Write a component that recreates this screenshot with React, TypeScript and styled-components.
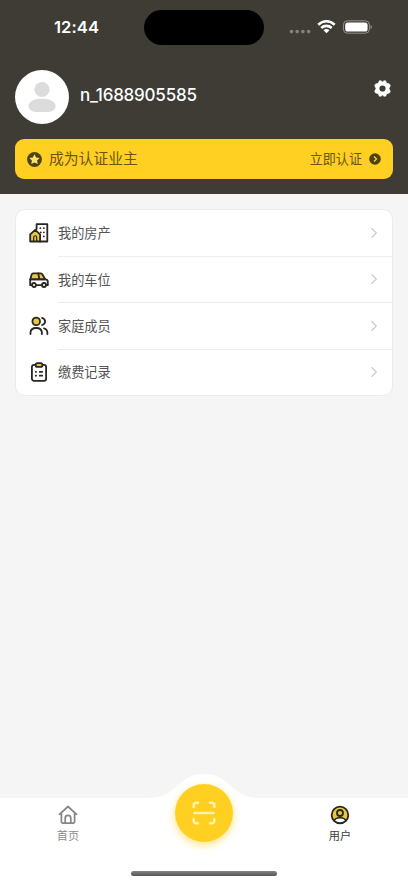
import React from "react";
import styled, { createGlobalStyle } from "styled-components";

const GlobalStyle = createGlobalStyle`
  * { box-sizing: border-box; }
  body {
    margin: 0;
    background: #f5f5f6;
    font-family: Inter, "Noto Sans CJK SC", sans-serif;
  }
  svg { display: block; flex: none; }
  button { border: 0; padding: 0; background: none; font: inherit; color: inherit; text-align: left; }
`;

const Screen = styled.div`
  display: flex;
  flex-direction: column;
  width: 408px;
  height: 883px;
  overflow: hidden;
  background: #f5f5f6;
`;

const Header = styled.header`
  height: 194px;
  flex: none;
  background: #3e3c35;
`;

const StatusBar = styled.div`
  display: grid;
  grid-template-columns: 144px 120px 1fr;
  height: 70px;
  padding-top: 10px;
`;

const Clock = styled.div`
  padding-left: 54px;
  height: 35px;
  line-height: 35px;
  font-size: 16.6px;
  font-weight: 600;
  letter-spacing: 0.05px;
  color: #fff;
`;

const Island = styled.div`
  height: 35px;
  border-radius: 18px;
  background: #000;
`;

const Signals = styled.div`
  display: flex;
  align-items: center;
  height: 34px;
  padding-left: 25px;
`;

const Profile = styled.div`
  display: flex;
  height: 54px;
  padding: 0 17px 0 15px;
`;

const Avatar = styled.div`
  width: 54px;
  height: 54px;
  border-radius: 50%;
  overflow: hidden;
  background: #fff;
`;

const UserName = styled.div`
  flex: 1;
  padding-left: 11px;
  line-height: 51px;
  font-size: 17px;
  font-weight: 500;
  letter-spacing: -0.22px;
  color: #fff;
`;

const Settings = styled.button`
  height: 17px;
  margin-top: 10px;
`;

const Banner = styled.div`
  display: flex;
  align-items: center;
  height: 40px;
  margin: 15px 15px 0;
  padding: 0 12px;
  border-radius: 9px;
  background: #ffcf22;
  color: #6a560f;
`;

const BannerTitle = styled.span`
  flex: 1;
  padding-left: 7px;
  font-size: 14.8px;
  line-height: 40px;
  height: 40px;
`;

const BannerAction = styled.button`
  display: flex;
  align-items: center;
  gap: 7px;
  font-size: 13.1px;
  line-height: 38px;
  height: 40px;
`;

const Card = styled.main`
  margin: 15px 15px 0;
  height: 187px;
  flex: none;
  border: 1px solid #ebebec;
  border-radius: 10px;
  background: #fff;
  display: grid;
  grid-template-rows: 47px 46px 47px 45px;
`;

const MenuRow = styled.button`
  display: flex;
  align-items: center;
  padding-left: 13px;
`;

const MenuBody = styled.span<{ $last: boolean }>`
  flex: 1;
  display: flex;
  align-items: center;
  justify-content: space-between;
  height: 100%;
  margin-left: 9px;
  padding-right: 14px;
  padding-bottom: 1px;
  border-bottom: 1px solid ${(p) => (p.$last ? "transparent" : "#ececec")};
  font-size: 13.2px;
  color: #555;
`;

const Spacer = styled.div`
  flex: 1;
`;

const Footer = styled.footer`
  position: relative;
  height: 85px;
  flex: none;
  background: #fff;
`;

const Bump = styled.svg`
  position: absolute;
  left: 149px;
  top: -25px;
`;

const Tabs = styled.nav`
  display: grid;
  grid-template-columns: repeat(3, 1fr);
  height: 73px;
`;

const Tab = styled.button<{ $active?: boolean }>`
  display: flex;
  flex-direction: column;
  align-items: center;
  gap: 3px;
  padding-top: 7px;
  font-size: 11.2px;
  line-height: 17px;
  color: ${(p) => (p.$active ? "#3c3c3a" : "#8c8c8c")};
`;

const ScanButton = styled.button`
  position: relative;
  display: flex;
  align-items: center;
  justify-content: center;
  justify-self: center;
  width: 58px;
  height: 58px;
  margin-top: -14px;
  border-radius: 50%;
  background: #ffcf22;
  box-shadow: 0 3px 8px rgba(255, 207, 34, 0.55);
`;

const HomeIndicator = styled.div`
  width: 146px;
  height: 5px;
  margin: 0 auto;
  border-radius: 3px;
  background: linear-gradient(#858585, #555);
`;

const ink = "#292722";
const gold = "#e8c745";

const SignalIcons = () => (
  <Signals>
    <svg width="83" height="16" viewBox="0 0 83 16">
      <g fill="#85837e">
        <circle cx="2.5" cy="12.6" r="1.8" />
        <circle cx="8.2" cy="12.6" r="1.8" />
        <circle cx="13.9" cy="12.6" r="1.8" />
        <circle cx="19.6" cy="12.6" r="1.8" />
      </g>
      <g fill="none" stroke="#fff" strokeWidth="2.6">
        <path d="M29.2 5.7C34.1 1.1 40.8 1.1 45.7 5.7" />
        <path d="M32.2 9C35.2 6.2 39.7 6.2 42.7 9" />
      </g>
      <path d="M34.5 11.2c1.7-1.5 4.3-1.5 6 0l-3 3.1z" fill="#fff" />
      <rect x="54.4" y="1.8" width="26" height="12.4" rx="4" fill="none" stroke="#92918d" />
      <rect x="56.2" y="3.5" width="22.4" height="9" rx="2.6" fill="#fff" />
      <path d="M81.5 6v4c1-.3 1.4-1 1.4-2s-.4-1.7-1.4-2z" fill="#92918d" />
    </svg>
  </Signals>
);

const PersonPicture = () => (
  <svg width="54" height="54" viewBox="0 0 54 54" fill="#dcdcdc">
    <circle cx="27" cy="19.5" r="7.6" />
    <path d="M13.5 36C13.5 31.5 19 28.8 27 28.8S40.5 31.5 40.5 36C40.5 40 36 42 32 42H22C18 42 13.5 40 13.5 36Z" />
  </svg>
);

const Gear = () => (
  <svg width="17" height="17" viewBox="-8.5 -8.5 17 17">
    <path
      d="M-3.2 -7.7H-1.4L0 -6.5L1.4 -7.7H3.2L4.2 -5.2L6.9 -4.6L7.8 -2.8L6.5 0L7.8 2.8L6.9 4.6L4.2 5.2L3.2 7.7H1.4L0 6.5L-1.4 7.7H-3.2L-4.2 5.2L-6.9 4.6L-7.8 2.8L-6.5 0L-7.8 -2.8L-6.9 -4.6L-4.2 -5.2Z"
      fill="#fff"
      stroke="#fff"
      strokeWidth=".6"
      strokeLinejoin="round"
    />
    <circle r="3.1" fill="#3e3c35" />
  </svg>
);

const StarBadge = () => (
  <svg width="15" height="15" viewBox="0 0 15 15">
    <circle cx="7.5" cy="7.5" r="7.4" fill="#51430f" />
    <path d="M7.5 2.2l1.6 3.3 3.6.5-2.6 2.5.6 3.6-3.2-1.7-3.2 1.7.6-3.6L2.3 6l3.6-.5z" fill="#ffe16a" />
  </svg>
);

const ArrowBadge = () => (
  <svg width="12" height="12" viewBox="0 0 12 12">
    <circle cx="6" cy="6" r="5.8" fill="#51430f" />
    <path d="M5 3.5L7.5 6 5 8.5" fill="none" stroke="#f5d568" strokeWidth="1.2" />
  </svg>
);

const Chevron = () => (
  <svg width="8" height="12" viewBox="0 0 8 12" fill="none" stroke="#c9c9c9" strokeWidth="1.2">
    <path d="M1.5 1.3L6.3 6l-4.8 4.7" />
  </svg>
);

const LineIcon = styled.svg.attrs({
  width: 20,
  height: 20,
  viewBox: "0 0 20 20",
  fill: "none",
  stroke: ink,
  strokeWidth: 1.8,
  strokeLinecap: "round",
  strokeLinejoin: "round",
})`
  margin-bottom: 1px;
`;

const Estate = () => (
  <LineIcon>
    <path d="M7.6 6V1.2h10.700v17.300H11" />
    <path d="M1.200 11.400l5-4.600 4.900 4.600v7.100H1.200z" fill={gold} />
    <path d="M4.700 18v-3.600c0-2.200 3-2.200 3 0V18" strokeWidth="1.200" />
    <path d="M11.300 5.200h.1M14.800 5.200h.1M11.800 9.300h.1M14.800 9.300h.1M14.800 13.400h.1" strokeWidth="1.700" />
  </LineIcon>
);

const Car = () => (
  <LineIcon>
    <path d="M1.300 9.300L2.500 4.900c.3-1.200.8-1.600 1.800-1.600h7.200c.8 0 1.300.3 1.800 1l2.900 5z" fill={gold} />
    <path d="M3 15.200H1.200V9.300h14.900c1.800 0 2.700.8 2.700 2.300v3.600h-1.700M7 15.200h6M9.300 3.500l1 5.600" />
    <circle cx="5" cy="15" r="2" fill="#fff" />
    <circle cx="15" cy="15" r="2" fill="#fff" />
  </LineIcon>
);

const Family = () => (
  <LineIcon>
    <circle cx="7.200" cy="5.400" r="3.800" fill={gold} />
    <path d="M1.500 18v-1.300c0-3.200 2.200-4.700 5.700-4.700s5.700 1.500 5.700 4.700V18M13 1.900c4.100 1.200 4.100 6.100 0 7.100M15 12.300c2.500.6 3.400 2.300 3.400 4.700v1" />
  </LineIcon>
);

const Bills = () => (
  <LineIcon>
    <rect x="2.900" y="2.900" width="14.200" height="15.900" rx="2" />
    <rect x="6.600" y="1.200" width="6.800" height="3.700" rx="1.700" fill={gold} />
    <path d="M6.700 9.800h.4M10.700 9.800h2.500M6.700 13.700h.4M10.700 13.700h2.500" strokeWidth="1.700" />
  </LineIcon>
);

const Home = () => (
  <svg width="20" height="20" viewBox="0 0 20 20" fill="none" stroke="#858585" strokeWidth="1.7" strokeLinecap="round" strokeLinejoin="round">
    <path d="M1.500 9.300L10 1.500l8.500 7.800M3.400 8v8.800c0 .8.500 1.300 1.300 1.300h10.600c.8 0 1.300-.5 1.300-1.300V8" />
    <path d="M7.200 18v-5.100c0-3.400 5.600-3.400 5.600 0V18" />
  </svg>
);

const User = () => (
  <svg width="20" height="20" viewBox="0 0 20 20" fill={gold} stroke={ink} strokeWidth="1.8">
    <circle cx="10" cy="10" r="8.300" />
    <circle cx="10" cy="8" r="3" />
    <path d="M4.300 15.800c.6-2.300 2.600-3 5.700-3s5.100.7 5.700 3c-3 3-8.400 3-11.400 0z" fill="#fff" strokeWidth="1.600" />
  </svg>
);

const Scan = () => (
  <svg width="24" height="24" viewBox="0 0 24 24" fill="none" stroke="#fff4ad" strokeWidth="2.6" strokeLinecap="round" strokeLinejoin="round">
    <path d="M1.700 6V4.500c0-1.700 1-2.800 2.800-2.800H6M18 1.700h1.500c1.700 0 2.800 1.100 2.800 2.800V6M22.300 18v1.500c0 1.700-1.100 2.800-2.800 2.800H18M6 22.300H4.500c-1.800 0-2.800-1.100-2.800-2.800V18M2.500 12h19" />
  </svg>
);

const menu = [
  { label: "我的房产", Icon: Estate },
  { label: "我的车位", Icon: Car },
  { label: "家庭成员", Icon: Family },
  { label: "缴费记录", Icon: Bills },
];

export default function App() {
  return (
    <Screen>
      <GlobalStyle />
      <Header>
        <StatusBar>
          <Clock>12:44</Clock>
          <Island />
          <SignalIcons />
        </StatusBar>
        <Profile>
          <Avatar><PersonPicture /></Avatar>
          <UserName>n_1688905585</UserName>
          <Settings aria-label="设置"><Gear /></Settings>
        </Profile>
        <Banner>
          <StarBadge />
          <BannerTitle>成为认证业主</BannerTitle>
          <BannerAction>立即认证<ArrowBadge /></BannerAction>
        </Banner>
      </Header>
      <Card>
        {menu.map(({ label, Icon }, i) => (
          <MenuRow key={label}>
            <Icon />
            <MenuBody $last={i === menu.length - 1}>
              {label}
              <Chevron />
            </MenuBody>
          </MenuRow>
        ))}
      </Card>
      <Spacer />
      <Footer>
        <Bump width="110" height="26" viewBox="0 0 110 26">
          <path d="M0 26V25C14 25 20 20 29 12C38 4 45 1 55 1S72 4 81 12C90 20 96 25 110 25V26Z" fill="#fff" />
        </Bump>
        <Tabs>
          <Tab><Home />首页</Tab>
          <ScanButton aria-label="扫一扫"><Scan /></ScanButton>
          <Tab $active><User />用户</Tab>
        </Tabs>
        <HomeIndicator />
      </Footer>
    </Screen>
  );
}
